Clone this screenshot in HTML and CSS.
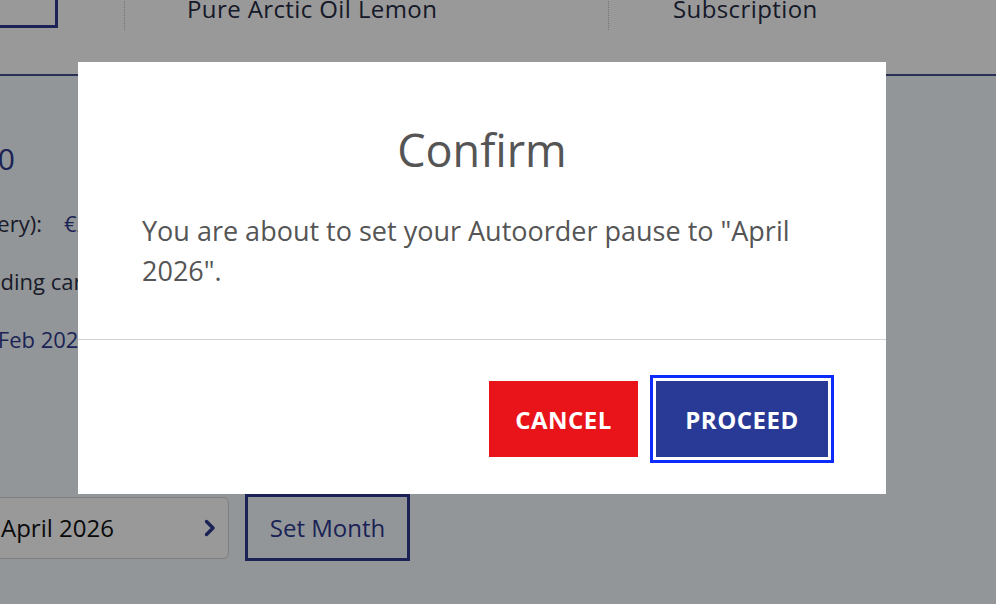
FILE: index.html
```html
<!DOCTYPE html>
<html lang="en">
<head>
  <meta charset="UTF-8">
  <meta name="viewport" content="width=device-width, initial-scale=1">
  <title>Autoorder - Pause</title>
  <link rel="stylesheet" href="styles.css">
</head>
<body>
  <!-- product row -->
  <div class="product-row">
    <div class="thumb"></div>
    <div class="cell cell-name">Pure Arctic Oil Lemon</div>
    <div class="cell cell-type">Subscription</div>
  </div>

  <section class="details">
    <div class="total">Total €40</div>
    <div class="row first">
      <span class="label">Price (per delivery):</span>
      <span class="val">€29,90</span>
    </div>
    <div class="row">
      <span class="label label-left">Outstanding cancellation</span>
    </div>
    <div class="row">
      <span class="label label-date val">Next delivery: 12 Feb 2026</span>
    </div>

    <div class="pause-row">
      <div class="month-select">
        <span>April 2026</span>
        <svg class="chev" viewBox="0 0 12 18" width="12" height="18">
          <path d="M2.5 2.5 L9 9 L2.5 15.5" fill="none" stroke="currentColor" stroke-width="3.4" stroke-linecap="round" stroke-linejoin="round"/>
        </svg>
      </div>
      <button class="set-month">Set Month</button>
    </div>
  </section>

  <!-- Confirm dialog -->
  <div class="overlay">
    <div class="modal">
      <div class="modal-body">
        <h2>Confirm</h2>
        <p>You are about to set your Autoorder pause to "April 2026".</p>
      </div>
      <div class="modal-footer">
        <button class="btn btn-cancel">CANCEL</button>
        <button class="btn btn-proceed">PROCEED</button>
      </div>
    </div>
  </div>
</body>
</html>
```

FILE: styles.css
```css
:root {
  --navy: #2f3a8e;
  --ink: #2b2f45;
  --page: #f5fbff;
  --grey-text: #555555;
}
* { margin:0; padding:0; box-sizing:border-box; }
body {
  font-family: "Open Sans", "Noto Sans", sans-serif;
  background: var(--page);
  color: var(--ink);
  width:996px; height:604px; overflow:hidden;
}

/* product row */
.product-row {
  display:flex; height:76px;
  background:#fff;
  border-bottom:2px solid #474f8e;
}
.thumb {
  width:120px; height:30px; margin-left:-62px; margin-top:-2px;
  border:3px solid var(--navy); border-top:none;
}
.cell {
  height:33px; margin-top:-3px;
  border-left:1px dotted #c4c4c4;
  padding-left:62px;
  font-size:24px; line-height:24px; letter-spacing:0.4px;
  color:#262b44;
}
.cell-name { margin-left:66px; width:484px; }
.cell-type { padding-left:64px; }

/* details */
.details { margin-left:-300px; padding-top:63px; }
.total { width:315px; text-align:right; font-size:30px; color:var(--navy); line-height:40px; }
.row { display:flex; gap:22px; font-size:22px; line-height:58px; }
.row.first { margin-top:15px; }
.label { width:342px; text-align:right; flex:none; }
.label-left { text-align:left; padding-left:218px; width:auto; }
.label-date { width:391px; }
.val { color:var(--navy); }
.pause-row { display:flex; gap:16px; align-items:center; margin-top:126px; margin-left:120px; }
.month-select {
  width:409px; height:62px;
  display:flex; align-items:center; justify-content:space-between;
  padding:0 12px 0 180px;
  background:#fff; border:1px solid #d2d4d8; border-radius:6px;
  font-size:24px; color:#111;
}
.chev { color:var(--navy); }
.set-month {
  width:165px; height:67px;
  background:none; border:3px solid var(--navy);
  font:24px "Open Sans", sans-serif; color:var(--navy);
}

/* dialog */
.overlay {
  position:fixed; inset:0;
  background:rgba(0,0,0,0.4);
  padding:62px 0 0 78px;
}
.modal { width:808px; background:#fff; }
.modal-body { padding:60px 64px 48px; color:var(--grey-text); }
.modal-body h2 {
  font-size:45px; font-weight:400; line-height:56px;
  text-align:center; margin-bottom:33px;
}
.modal-body p { font-size:27px; line-height:40px; }
.modal-footer {
  border-top:1px solid #d3d3d3;
  display:flex; justify-content:flex-end; gap:18px;
  padding:41px 58px 37px;
}
.btn {
  height:76px; border:none;
  font:700 24px "Open Sans", sans-serif; letter-spacing:0.5px;
  color:#fff;
}
.btn-cancel { width:149px; background:#e8141a; }
.btn-proceed {
  width:172px; background:#283a96;
  outline:3px solid #0b2bff; outline-offset:3px;
}
```
